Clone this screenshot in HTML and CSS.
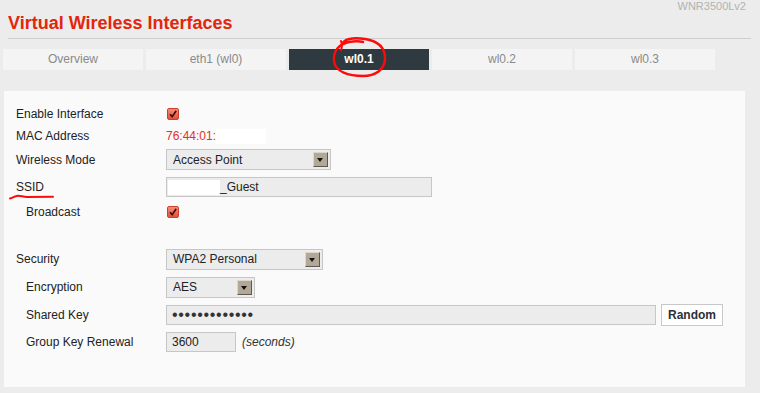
FILE: index.html
```html
<!DOCTYPE html>
<html>
<head>
<meta charset="utf-8">
<link rel="stylesheet" href="styles.css">
</head>
<body>
<div class="model">WNR3500Lv2</div>
<h1 class="title">Virtual Wireless Interfaces</h1>
<div class="tabs">
  <div class="tab">Overview</div>
  <div class="tab">eth1 (wl0)</div>
  <div class="tab active">wl0.1</div>
  <div class="tab">wl0.2</div>
  <div class="tab">wl0.3</div>
</div>
<div class="panel">
  <div class="form">
    <div class="label">Enable Interface</div>
    <div class="value"><span class="check"><svg viewBox="0 0 12 12" width="12" height="12"><path d="M3 6.2 L5.2 8.6 L9.2 2.8" fill="none" stroke="#3a0c06" stroke-width="1.6"/></svg></span></div>

    <div class="label">MAC Address</div>
    <div class="value"><span class="mac">76:44:01:</span><span class="blank mac-blank"></span></div>

    <div class="label">Wireless Mode</div>
    <div class="value"><div class="select w165"><span>Access Point</span><span class="arrow"></span></div></div>

    <div class="label">SSID</div>
    <div class="value"><div class="input w266 ssid"><span class="blank ssid-blank"></span><span>_Guest</span></div></div>

    <div class="label sub">Broadcast</div>
    <div class="value"><span class="check"><svg viewBox="0 0 12 12" width="12" height="12"><path d="M3 6.2 L5.2 8.6 L9.2 2.8" fill="none" stroke="#3a0c06" stroke-width="1.6"/></svg></span></div>

    <div class="spacer"></div>
    <div class="spacer"></div>

    <div class="label">Security</div>
    <div class="value"><div class="select w157"><span>WPA2 Personal</span><span class="arrow"></span></div></div>

    <div class="label sub">Encryption</div>
    <div class="value"><div class="select w89"><span>AES</span><span class="arrow"></span></div></div>

    <div class="label sub">Shared Key</div>
    <div class="value"><div class="input w490 dots">&#8226;&#8226;&#8226;&#8226;&#8226;&#8226;&#8226;&#8226;&#8226;&#8226;&#8226;&#8226;&#8226;</div><div class="button">Random</div></div>

    <div class="label sub">Group Key Renewal</div>
    <div class="value"><div class="input w70">3600</div><span class="unit">(seconds)</span></div>
  </div>
</div>

<svg class="mark-circle" viewBox="0 0 64 46" width="64" height="46">
  <path d="M13 9 C14 3 24 1 36 3 C48 5 56 11 56 22 C56 34 46 40 34 40 C20 40 6 36 5 25 C4 15 10 8 20 6 C26 5 30 5 34 6" fill="none" stroke="#ff0a0a" stroke-width="2.4" stroke-linecap="round"/>
  <path d="M12 5 C13 8 13 12 12 14" fill="none" stroke="#ff0a0a" stroke-width="2" stroke-linecap="round"/>
</svg>
<svg class="mark-line" viewBox="0 0 46 6" width="46" height="6">
  <path d="M1 4.5 C4 3.5 6 2 9 1.8 C12 1.7 14 3 18 3 L44 2.8" fill="none" stroke="#ff0a0a" stroke-width="2" stroke-linecap="round"/>
</svg>
</body>
</html>
```

FILE: styles.css
```css
* { box-sizing: border-box; }

body {
  margin: 0;
  background: #ececec;
  font-family: "Liberation Sans", Arial, sans-serif;
  font-size: 12px;
  color: #222;
  position: relative;
  height: 393px;
  overflow: hidden;
}

.model {
  height: 13px;
  line-height: 13px;
  font-size: 11px;
  color: #b2b2b2;
  text-align: right;
  padding-right: 14px;
}

.title {
  margin: 0 9px 0 8px;
  padding-bottom: 4px;
  font-size: 18px;
  line-height: 21px;
  font-weight: bold;
  color: #e2260d;
  border-bottom: 1px solid #cdcdcd;
}

.tabs {
  display: flex;
  gap: 3px;
  margin: 10px 0 0 3px;
}

.tab {
  width: 140px;
  height: 21px;
  line-height: 21px;
  text-align: center;
  background: #f4f4f4;
  color: #8a8a8a;
}

.tab.active {
  background: #2e3a3f;
  color: #fff;
  font-weight: bold;
}

.panel {
  margin: 21px 15px 0 4px;
  height: 296px;
  background: #fafafa;
  padding: 12px 12px 0 12px;
}

.form {
  display: grid;
  grid-template-columns: 150px auto;
  grid-template-rows: 21px 23px 25px 30px 19px 24px 28px 28px 28px 26px;
  align-items: center;
}

.label {
  line-height: 14px;
  color: #222;
}

.label.sub { padding-left: 10px; }

.value {
  display: flex;
  align-items: center;
  height: 100%;
}

.check {
  width: 12px;
  height: 12px;
  margin-left: 1px;
  border: 1px solid #c9402d;
  border-radius: 2px;
  background: linear-gradient(#f88a78, #e5503c);
  display: flex;
  align-items: center;
  justify-content: center;
  overflow: hidden;
}

.check svg { display: block; flex: none; }

.mac { color: #e4321a; }

.blank { background: #fff; display: inline-block; }

.mac-blank {
  width: 50px;
  height: 15px;
  margin-top: 2px;
}

.select {
  height: 21px;
  border: 1px solid #c6c6c6;
  background: #ececec;
  display: flex;
  align-items: center;
  padding: 0 2px 0 6px;
  color: #222;
}

.select .arrow {
  margin-left: auto;
  width: 15px;
  height: 15px;
  background: #b3a898;
  border-top: 1px solid #ddd6cb;
  border-left: 1px solid #ddd6cb;
  border-right: 1px solid #5e574e;
  border-bottom: 1px solid #5e574e;
  position: relative;
}

.select .arrow::after {
  content: "";
  position: absolute;
  left: 3px;
  top: 5px;
  border-left: 3.5px solid transparent;
  border-right: 3.5px solid transparent;
  border-top: 4px solid #111;
}

.w165 { width: 165px; }
.w157 { width: 157px; }
.w89 { width: 89px; }
.w266 { width: 266px; }
.w490 { width: 490px; }
.w70 { width: 70px; }

.input {
  height: 20px;
  border: 1px solid #c6c6c6;
  background: #ececec;
  display: flex;
  align-items: center;
  padding-left: 5px;
  color: #222;
}

.input.ssid { padding-left: 1px; }

.ssid-blank {
  width: 52px;
  height: 15px;
}

.dots {
  padding-left: 5px;
  font-size: 16px;
  letter-spacing: 0.7px;
  color: #333;
}

.button {
  margin-left: 5px;
  width: 62px;
  height: 22px;
  border: 1px solid #c8c8c8;
  background: #fff;
  font-weight: bold;
  color: #2c2f38;
  display: flex;
  align-items: center;
  justify-content: center;
}

.unit {
  margin-left: 6px;
  font-style: italic;
  color: #333;
}

.mark-circle {
  position: absolute;
  left: 329px;
  top: 36px;
}

.mark-line {
  position: absolute;
  left: 9px;
  top: 194px;
}
```
